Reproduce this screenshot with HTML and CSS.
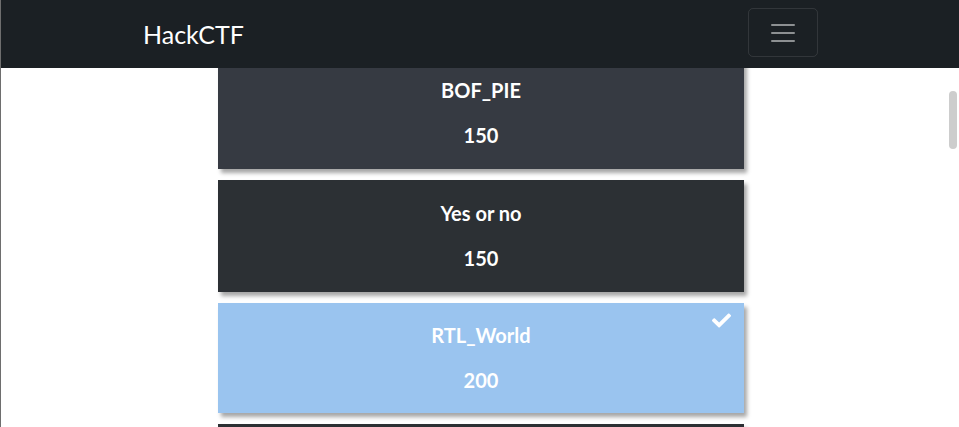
FILE: index.html
```html
<!DOCTYPE html>
<html lang="en">
<head>
<meta charset="utf-8">
<title>HackCTF</title>
<link rel="stylesheet" href="styles.css">
</head>
<body>
<nav class="navbar">
  <a class="brand" href="#">HackCTF</a>
  <button class="toggler" type="button" aria-label="Toggle navigation">
    <svg class="toggler-icon" viewBox="0 0 30 30" width="30" height="30">
      <path d="M4 7h22M4 15h22M4 23h22" stroke="rgba(255,255,255,0.5)" stroke-width="2" stroke-linecap="round"/>
    </svg>
  </button>
</nav>
<div class="scroll-thumb"></div>
<main class="list">
  <div class="card card-a">
    <div class="title">BOF_PIE</div>
    <div class="points">150</div>
  </div>
  <div class="card card-b">
    <div class="title">Yes or no</div>
    <div class="points">150</div>
  </div>
  <div class="card card-solved">
    <svg class="check" viewBox="0 0 512 512" width="19" height="19">
      <path fill="#fff" d="M173.898 439.404l-166.4-166.4c-9.997-9.997-9.997-26.206 0-36.204l36.203-36.204c9.997-9.998 26.207-9.998 36.204 0L192 312.69 432.095 72.596c9.997-9.997 26.207-9.997 36.204 0l36.203 36.204c9.997 9.997 9.997 26.206 0 36.204l-294.4 294.401c-9.998 9.997-26.207 9.997-36.204-.001z"/>
    </svg>
    <div class="title">RTL_World</div>
    <div class="points">200</div>
  </div>
  <div class="card card-b card-empty"></div>
</main>
</body>
</html>
```
FILE: styles.css
```css
html {
  border-left: 1px solid #6e6e6e;
  background: #fff;
}
body {
  margin: 0;
  font-family: Lato, "Open Sans", sans-serif;
  overflow: hidden;
  height: 427px;
}
.navbar {
  position: fixed;
  top: 0;
  left: 1px;
  right: 0;
  height: 68px;
  background: #1b2024;
  display: flex;
  align-items: center;
  justify-content: space-between;
  padding: 0 141px 0 142px;
  box-sizing: border-box;
  z-index: 10;
}
.brand {
  color: #fff;
  text-decoration: none;
  font-size: 25px;
  line-height: 30px;
  margin-top: -1px;
}
.toggler {
  width: 70px;
  height: 49px;
  margin-top: -3px;
  background: transparent;
  border: 1px solid rgba(255,255,255,0.1);
  border-radius: 5px;
  display: flex;
  align-items: center;
  justify-content: center;
  padding: 0;
}
.toggler-icon {
  display: block;
}
.scroll-thumb {
  position: fixed;
  top: 91px;
  left: 949px;
  width: 8px;
  height: 58px;
  border-radius: 4px;
  background: #cdcdcd;
  z-index: 5;
}
.list {
  display: flex;
  flex-direction: column;
  align-items: center;
  gap: 11px;
  padding: 57px 0 0 2px;
}
.card {
  position: relative;
  width: 526px;
  box-sizing: border-box;
  padding: 21px 0 22px;
  display: flex;
  flex-direction: column;
  align-items: center;
  gap: 21px;
  color: #fff;
  font-weight: 700;
  font-size: 20px;
  line-height: 24px;
  box-shadow: 3px 4px 4px rgba(0,0,0,0.35);
}
.card-a {
  background: #363a42;
}
.card-b {
  background: #2c3034;
}
.card-empty {
  height: 112px;
}
.card-solved {
  background: #9ac4ef;
  padding: 20px 0 21px;
}
.check {
  position: absolute;
  top: 8px;
  right: 13px;
}
```
